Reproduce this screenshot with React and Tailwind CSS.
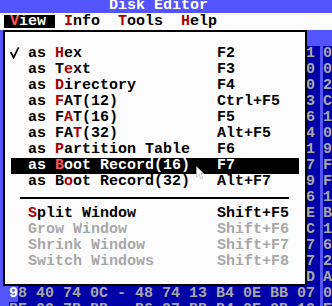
import React from "react";

const items = [
  { check: true, pre: "as ", hot: "H", post: "ex", keys: "F2" },
  { pre: "as T", hot: "e", post: "xt", keys: "F3" },
  { pre: "as ", hot: "D", post: "irectory", keys: "F4" },
  { pre: "as ", hot: "F", post: "AT(12)", keys: "Ctrl+F5" },
  { pre: "as F", hot: "A", post: "T(16)", keys: "F5" },
  { pre: "as FA", hot: "T", post: "(32)", keys: "Alt+F5" },
  { pre: "as ", hot: "P", post: "artition Table", keys: "F6" },
  { pre: "as ", hot: "B", post: "oot Record(16)", keys: "F7", active: true },
  { pre: "as B", hot: "o", post: "ot Record(32)", keys: "Alt+F7" },
  { separator: true },
  { pre: "", hot: "S", post: "plit Window", keys: "Shift+F5" },
  { pre: "Grow Window", keys: "Shift+F6", disabled: true },
  { pre: "Shrink Window", keys: "Shift+F7", disabled: true },
  { pre: "Switch Windows", keys: "Shift+F8", disabled: true },
];

const bytes = [
  ["EB", "3C", "90", "4D", "53", "44", "4F", "53", "35", "2E", "31", "00"],
  ["02", "08", "01", "00", "02", "00", "02", "00", "00", "F8", "F0", "00"],
  ["3F", "00", "FF", "00", "3F", "00", "00", "00", "41", "0C", "00", "2A"],
  ["80", "00", "29", "D8", "1A", "3E", "24", "4E", "4F", "20", "43", "C9"],
  ["4E", "41", "4D", "45", "20", "20", "20", "20", "46", "41", "36", "10"],
  ["32", "20", "20", "20", "33", "C9", "8E", "D1", "BC", "F0", "74", "0B"],
  ["8E", "C1", "8E", "D9", "B8", "00", "20", "8E", "C0", "FC", "B1", "9E"],
  ["BD", "00", "7C", "88", "4E", "02", "8A", "56", "40", "B4", "47", "F4"],
  ["13", "73", "05", "B9", "FF", "FF", "8A", "F1", "66", "0F", "B9", "F6"],
  ["C6", "40", "66", "0F", "B6", "D1", "80", "E2", "3F", "F7", "E6", "16"],
  ["86", "CD", "C0", "ED", "06", "41", "66", "0F", "B7", "C9", "7E", "B5"],
  ["F7", "E1", "66", "89", "46", "F8", "83", "7E", "16", "00", "7C", "1D"],
  ["38", "66", "83", "7E", "11", "00", "77", "32", "66", "8B", "47", "6A"],
  ["1C", "66", "83", "C0", "0C", "BB", "00", "80", "B9", "01", "27", "28"],
  ["2B", "00", "E9", "48", "03", "A0", "FA", "7D", "B4", "7D", "8D", "A6"],
  ["98", "40", "74", "0C", "48", "74", "13", "B4", "0E", "BB", "07", "00"],
  ["BE", "00", "7B", "BB", "B6", "07", "BB", "B4", "0E", "0B", "10", "EB"],
];

const fmt = (b) => `${b[0]} ${b[1]} ${b[2]} ${b[3]} - ${b.slice(4, 11).join(" ")} ${b[11][0]}`;

function HexRow({ b, cursor }) {
  const text = fmt(b);
  return (
    <div className="flex h-[16px] leading-[16px] whitespace-pre text-[#a8a8a8]">
      <div className="w-[10px] bg-[#5454fc]" />
      {cursor ? (
        <>
          <div className="w-[9px] bg-[#5454fc] text-white">{text[0]}</div>
          <div className="w-[297px] bg-[#0000a8]">{text.slice(1, 34)}</div>
        </>
      ) : (
        <div className="w-[306px] bg-[#0000a8]">{text.slice(0, 34)}</div>
      )}
      <div className="w-[6px] bg-[#0000a8]" />
      <div className="w-[3px] bg-[#5454fc]" />
      <div className="flex-1 bg-[#0000a8]">{text[35]}</div>
    </div>
  );
}

function MenuRow({ item }) {
  if (item.separator) {
    return (
      <div className="h-[16px] flex items-center">
        <div className="ml-[15px] w-[269px] h-[2px] bg-black" />
      </div>
    );
  }
  const base = item.active ? "bg-black text-white" : item.disabled ? "text-[#a8a8a8]" : "text-black";
  const hot = item.active ? "text-[#fc5454]" : "text-[#a80000]";
  return (
    <div className={`ml-[6px] w-[288px] h-[16px] leading-[16px] grid grid-cols-[17px_189px_1fr] whitespace-pre ${base}`}>
      <div className="relative">
        {item.check && (
          <svg width="10" height="12" viewBox="0 0 10 12" className="absolute left-[-1px] top-[1px]">
            <path d="M0.8 5.2 L3.6 10.6 L8.6 0.4" fill="none" stroke="black" strokeWidth="1.7" />
          </svg>
        )}
      </div>
      <div>
        {item.pre}
        {item.hot && <span className={hot}>{item.hot}</span>}
        {item.post}
      </div>
      <div>{item.keys}</div>
    </div>
  );
}

export default function App() {
  return (
    <div className="relative w-[332px] h-[306px] overflow-hidden bg-[#5454fc] font-['Liberation_Mono','DejaVu_Sans_Mono',monospace] font-bold text-[15px]">
      {/* title */}
      <div className="h-[13px] overflow-hidden bg-[#5454fc]">
        <div className="mt-[-2px] pl-[109px] leading-[16px] text-white whitespace-pre">Disk Editor</div>
      </div>

      {/* menu bar */}
      <div className="h-[17px] bg-[#fcfcfc] flex items-start whitespace-pre leading-[14px] text-black">
        <div className="ml-[4px] mt-[2px] h-[13px] w-[51px] pl-[6px] bg-black text-white">
          <span className="text-[#fc5454]">V</span>iew
        </div>
        <div className="ml-[9px] mt-[2px]">
          <span className="text-[#a80000]">I</span>nfo
        </div>
        <div className="ml-[18px] mt-[2px]">
          <span className="text-[#a80000]">T</span>ools
        </div>
        <div className="ml-[18px] mt-[2px]">
          <span className="text-[#a80000]">H</span>elp
        </div>
      </div>

      {/* hex dump behind */}
      <div className="flex flex-col">
        <div className="h-[16px] bg-[#5454fc]" />
        {bytes.map((b, i) => (
          <HexRow key={i} b={b} cursor={i === 15} />
        ))}
      </div>

      {/* View menu */}
      <div className="absolute left-[3px] top-[30px] w-[304px] h-[256px] border-2 border-black bg-[#fcfcfc] pt-[14px]">
        {items.map((item, i) => (
          <MenuRow key={i} item={item} />
        ))}
      </div>

      {/* mouse pointer */}
      <svg width="9" height="14" viewBox="0 0 9 14" className="absolute left-[196px] top-[166px]">
        <path d="M0.5 0.5 L0.5 11 L3 8.5 L5 13 L6.8 12.2 L4.8 7.8 L8 7.8 Z" fill="white" stroke="#a8a8a8" strokeWidth="0.6" />
      </svg>
    </div>
  );
}
